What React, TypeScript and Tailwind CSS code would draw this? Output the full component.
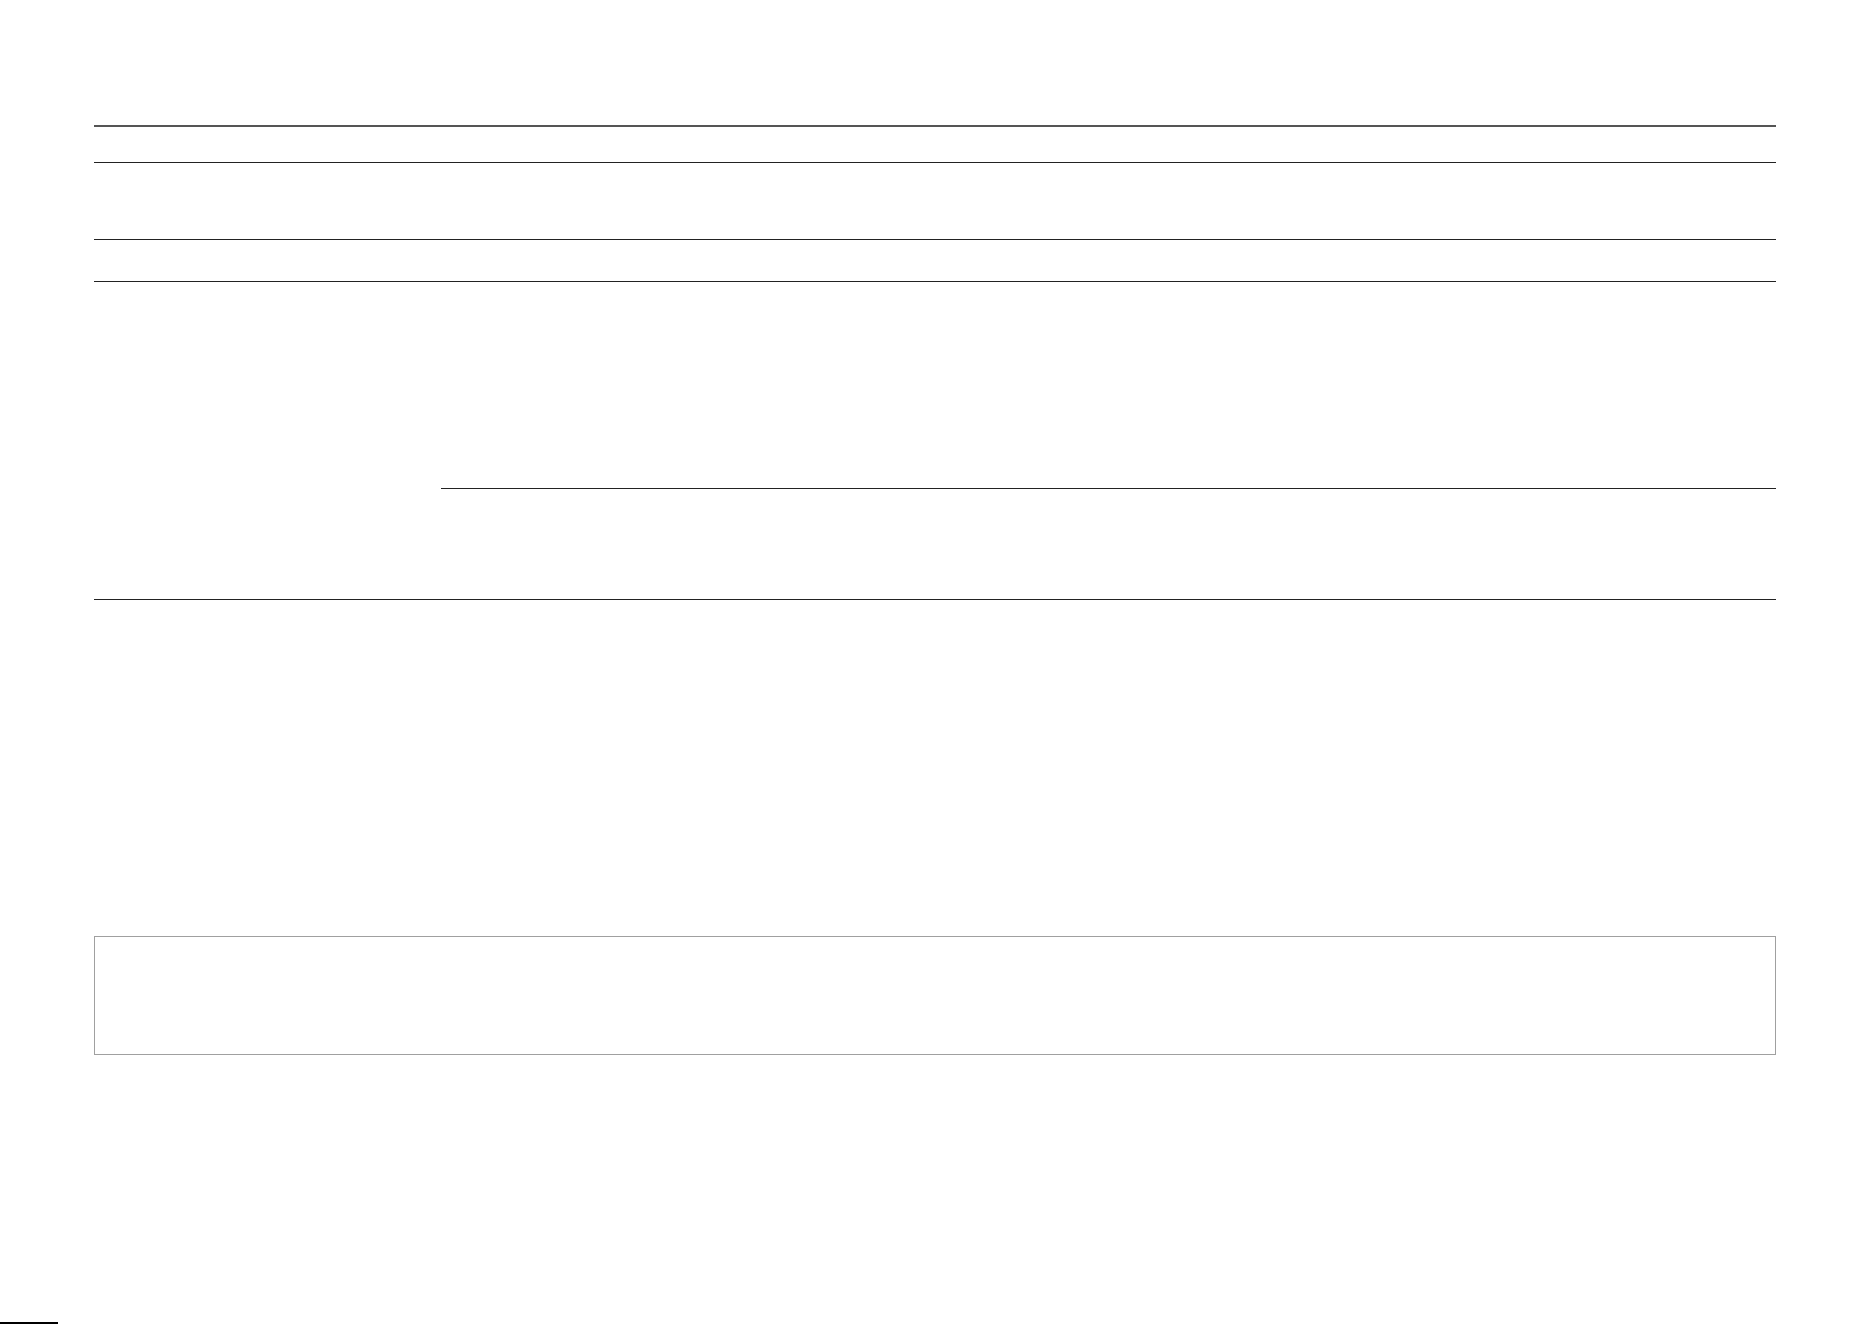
import React from 'react';

function Rule({ className = '' }: { className?: string }) {
  return <div className={`border-b border-[#222] ${className}`} />;
}

export default function App() {
  return (
    <div className="min-h-[1324px] bg-white pt-[125px] font-['Liberation_Sans',sans-serif]">
      <div className="ml-[94px] w-[1682px]">
        {/* header block */}
        <div className="h-[2px] bg-[#555]" />
        <Rule className="h-[36px]" />
        <Rule className="h-[77px]" />
        <Rule className="h-[42px]" />

        {/* two-column section */}
        <div className="flex h-[318px] border-b border-[#222]">
          <div className="w-[347px] shrink-0" />
          <div className="flex flex-1 flex-col">
            <Rule className="h-[207px]" />
            <div className="flex-1" />
          </div>
        </div>

        {/* empty panel */}
        <div className="mt-[336px] h-[119px] border border-[#a0a0a0]" />
      </div>

      <div className="mt-[267px] h-[2px] w-[58px] bg-black" />
    </div>
  );
}
